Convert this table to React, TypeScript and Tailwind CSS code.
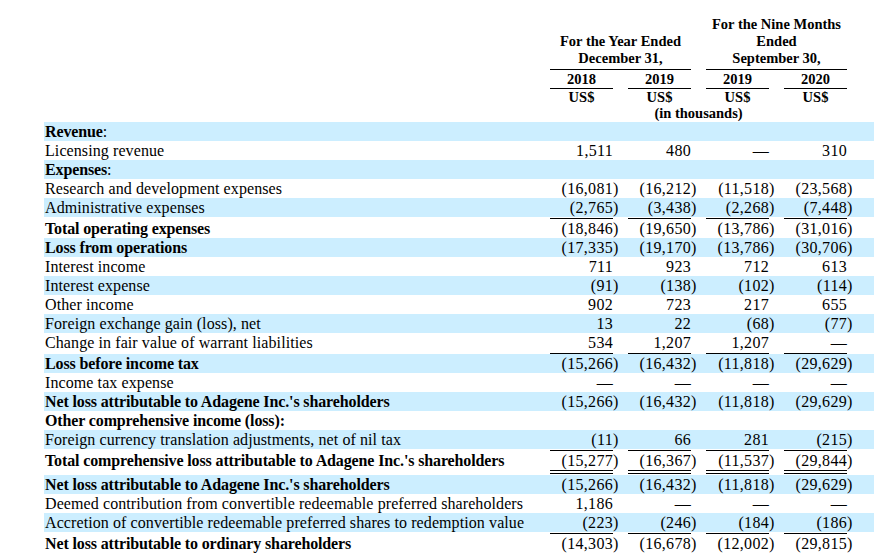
import React from "react";

type Row = {
  label: string;
  colon?: boolean;
  bold?: boolean;
  values?: string[];
  rule?: boolean;
  double?: boolean;
};

const rows: Row[] = [
  { label: "Revenue", colon: true, bold: true },
  { label: "Licensing revenue", values: ["1,511", "480", "—", "310"] },
  { label: "Expenses", colon: true, bold: true },
  { label: "Research and development expenses", values: ["(16,081)", "(16,212)", "(11,518)", "(23,568)"] },
  { label: "Administrative expenses", values: ["(2,765)", "(3,438)", "(2,268)", "(7,448)"] },
  { label: "Total operating expenses", bold: true, rule: true, values: ["(18,846)", "(19,650)", "(13,786)", "(31,016)"] },
  { label: "Loss from operations", bold: true, values: ["(17,335)", "(19,170)", "(13,786)", "(30,706)"] },
  { label: "Interest income", values: ["711", "923", "712", "613"] },
  { label: "Interest expense", values: ["(91)", "(138)", "(102)", "(114)"] },
  { label: "Other income", values: ["902", "723", "217", "655"] },
  { label: "Foreign exchange gain (loss), net", values: ["13", "22", "(68)", "(77)"] },
  { label: "Change in fair value of warrant liabilities", values: ["534", "1,207", "1,207", "—"] },
  { label: "Loss before income tax", bold: true, rule: true, values: ["(15,266)", "(16,432)", "(11,818)", "(29,629)"] },
  { label: "Income tax expense", values: ["—", "—", "—", "—"] },
  { label: "Net loss attributable to Adagene Inc.'s shareholders", bold: true, values: ["(15,266)", "(16,432)", "(11,818)", "(29,629)"] },
  { label: "Other comprehensive income (loss):", bold: true },
  { label: "Foreign currency translation adjustments, net of nil tax", values: ["(11)", "66", "281", "(215)"] },
  { label: "Total comprehensive loss attributable to Adagene Inc.'s shareholders", bold: true, rule: true, double: true, values: ["(15,277)", "(16,367)", "(11,537)", "(29,844)"] },
  { label: "Net loss attributable to Adagene Inc.'s shareholders", bold: true, values: ["(15,266)", "(16,432)", "(11,818)", "(29,629)"] },
  { label: "Deemed contribution from convertible redeemable preferred shareholders", values: ["1,186", "—", "—", "—"] },
  { label: "Accretion of convertible redeemable preferred shares to redemption value", values: ["(223)", "(246)", "(184)", "(186)"] },
  { label: "Net loss attributable to ordinary shareholders", bold: true, rule: true, values: ["(14,303)", "(16,678)", "(12,002)", "(29,815)"] },
];

const cols = "grid grid-cols-[506px_63px_15px_63px_15px_63px_15px_63px_15px]";

function Rule({ double }: { double?: boolean }) {
  return (
    <div className={`${cols} ${double ? "h-[5px]" : "h-[2px]"}`}>
      <div />
      {[0, 1, 2, 3].map((i) => (
        <React.Fragment key={i}>
          {double ? (
            <div className="h-[4px] border-y border-black" />
          ) : (
            <div className="h-[2px] border-b border-black" />
          )}
          <div />
        </React.Fragment>
      ))}
    </div>
  );
}

function DataRow({ row, shaded }: { row: Row; shaded: boolean }) {
  return (
    <div className={`${cols} h-[19px] leading-[19px] ${shaded ? "bg-[#cceeff]" : ""}`}>
      <div className="pl-px whitespace-nowrap tracking-[0.09px]">
        <span className={row.bold ? "font-bold tracking-[-0.13px]" : ""}>{row.label}</span>
        {row.colon && ":"}
      </div>
      {[0, 1, 2, 3].map((i) => {
        const v = row.values?.[i] ?? "";
        const neg = v.endsWith(")");
        return (
          <React.Fragment key={i}>
            <div className="text-right tracking-[0.3px]">{neg ? v.slice(0, -1) : v}</div>
            <div>{neg ? ")" : ""}</div>
          </React.Fragment>
        );
      })}
    </div>
  );
}

function Header() {
  return (
    <div className="flex text-[14.5px] font-bold text-center">
      <div className="w-[506px]" />
      <div className="w-[297px]">
        <div className="flex items-end gap-[15px] leading-[17px]">
          <div className="w-[141px] pb-[2px] border-b border-black">
            <div>For the Year Ended</div>
            <div>December 31,</div>
          </div>
          <div className="w-[141px] pb-[2px] border-b border-black">
            <div>For the Nine Months</div>
            <div>Ended</div>
            <div>September 30,</div>
          </div>
        </div>
        <div className="flex gap-[15px] leading-[18px]">
          {["2018", "2019", "2019", "2020"].map((y, i) => (
            <div key={i} className="w-[63px] border-b border-black">
              {y}
            </div>
          ))}
        </div>
        <div className="flex gap-[15px] leading-[16px]">
          {[0, 1, 2, 3].map((i) => (
            <div key={i} className="w-[63px]">
              US$
            </div>
          ))}
        </div>
        <div className="leading-[17px]">(in thousands)</div>
      </div>
    </div>
  );
}

export default function App() {
  return (
    <div className="w-[874px] h-[554px] overflow-hidden bg-white text-black pt-[16px] pl-[44px] font-['Liberation_Serif','Times_New_Roman',serif] text-[16px]">
      <Header />
      {rows.map((row, i) => (
        <React.Fragment key={i}>
          {row.rule && <Rule />}
          <DataRow row={row} shaded={i % 2 === 0} />
          {row.double && <Rule double />}
        </React.Fragment>
      ))}
    </div>
  );
}
